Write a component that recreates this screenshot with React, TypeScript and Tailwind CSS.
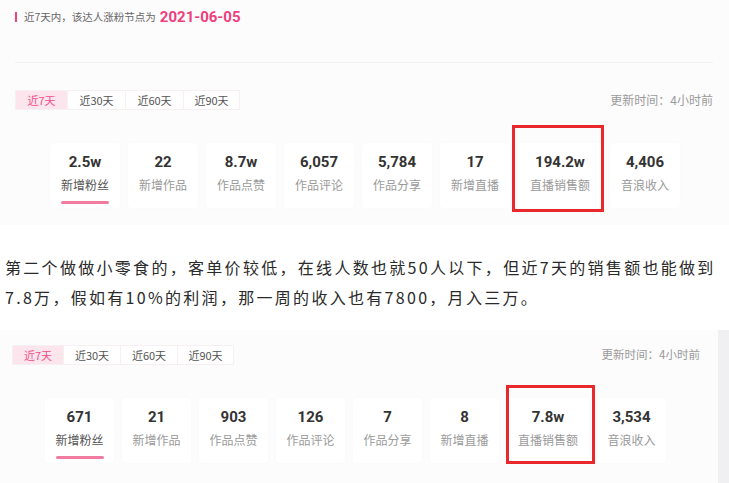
import React from 'react'

interface Stat {
  value: string
  label: string
  wide?: boolean
  boxed?: boolean
}

interface RowProps {
  stats: Stat[]
  cardW: string
  wideW: string
  boxClass: string
}

const tabs = ['近7天', '近30天', '近60天', '近90天']

const cjk = { fontFamily: '"Noto Sans CJK SC", "Noto Sans", sans-serif' }
const num = { fontFamily: 'Roboto, "Noto Sans CJK SC", sans-serif' }

function Tabs({ widths }: { widths: string[] }) {
  return (
    <div className="flex h-[20px] border border-[#f7f0f3] bg-white">
      {tabs.map((t, i) => (
        <div
          key={t}
          className={`${widths[i]} flex items-center justify-center text-[11px] ${
            i === 0 ? 'bg-[#fde5ee] text-[#ef5089]' : 'border-l border-[#f7f0f3] text-[#555]'
          }`}
        >
          {t}
        </div>
      ))}
    </div>
  )
}

function StatRow({ stats, cardW, wideW, boxClass }: RowProps) {
  return (
    <div className="flex gap-[8px]">
      {stats.map((s, i) => (
        <div
          key={s.label}
          className={`relative h-[65px] ${s.wide ? wideW : cardW} rounded bg-white shadow-[0_0_5px_rgba(0,0,0,0.015)] flex flex-col items-center`}
        >
          <div className="mt-[9px] h-[20px] leading-[20px] text-[15px] font-bold text-[#333]" style={num}>
            {s.value}
          </div>
          <div className={`mt-[5px] h-[16px] leading-[16px] text-[12px] ${i === 0 ? 'text-[#555]' : 'text-[#9a9a9a]'}`}>
            {s.label}
          </div>
          {i === 0 && <div className="mt-[8px] h-[3px] w-[48px] rounded-full bg-[#f27ba0]" />}
          {s.boxed && <div className={`absolute border-[3px] border-[#e8282b] ${boxClass}`} />}
        </div>
      ))}
    </div>
  )
}

const first: Stat[] = [
  { value: '2.5w', label: '新增粉丝' },
  { value: '22', label: '新增作品' },
  { value: '8.7w', label: '作品点赞' },
  { value: '6,057', label: '作品评论' },
  { value: '5,784', label: '作品分享' },
  { value: '17', label: '新增直播' },
  { value: '194.2w', label: '直播销售额', wide: true, boxed: true },
  { value: '4,406', label: '音浪收入' },
]

const second: Stat[] = [
  { value: '671', label: '新增粉丝' },
  { value: '21', label: '新增作品' },
  { value: '903', label: '作品点赞' },
  { value: '126', label: '作品评论' },
  { value: '7', label: '作品分享' },
  { value: '8', label: '新增直播' },
  { value: '7.8w', label: '直播销售额', wide: true, boxed: true },
  { value: '3,534', label: '音浪收入' },
]

export default function App() {
  return (
    <div className="w-[729px] h-[483px] overflow-hidden bg-white" style={cjk}>
      {/* first panel */}
      <section className="h-[225px] bg-[#fdfcfd] pl-[15px] pr-[16px] pt-[10px]">
        <div className="flex h-[14px] items-center">
          <div className="h-[10px] w-[2px] bg-[#f0407d]" />
          <span className="ml-[7px] text-[10.5px] text-[#666]">近7天内，该达人涨粉节点为</span>
          <span className="ml-[4px] text-[15px] font-bold text-[#ee3e7c]" style={num}>
            2021-06-05
          </span>
        </div>
        <div className="mt-[38px] h-px bg-[#f5f0f3]" />
        <div className="mt-[27px] flex items-center justify-between">
          <Tabs widths={['w-[51px]', 'w-[58px]', 'w-[58px]', 'w-[56px]']} />
          <span className="text-[12px] text-[#9a9a9a]">更新时间：4小时前</span>
        </div>
        <div className="mt-[33px] pl-[35px]">
          <StatRow
            stats={first}
            cardW="w-[70px]"
            wideW="w-[84px]"
            boxClass="-left-[6px] -right-[2px] -top-[18px] -bottom-[4px]"
          />
        </div>
      </section>

      {/* text */}
      <div className="h-[105px] pt-[27px] pl-[5px] whitespace-nowrap text-[16px] leading-[30px] tracking-[2.3px] text-[#2a2a2a]">
        第二个做做小零食的，客单价较低，在线人数也就50人以下，但近7天的销售额也能做到
        <br />
        7.8万，假如有10%的利润，那一周的收入也有7800，月入三万。
      </div>

      {/* second panel */}
      <section className="flex h-[153px]">
        <div className="flex-1 bg-[#fdfcfd] pl-[12px] pr-[18px] pt-[15px]">
          <div className="flex items-center justify-between">
            <Tabs widths={['w-[50px]', 'w-[57px]', 'w-[57px]', 'w-[56px]']} />
            <span className="text-[11.5px] text-[#9a9a9a]">更新时间：4小时前</span>
          </div>
          <div className="mt-[33px] pl-[33px]">
            <StatRow
              stats={second}
              cardW="w-[69px]"
              wideW="w-[82px]"
              boxClass="-left-[1px] -right-[6px] -top-[13px] -bottom-[1px]"
            />
          </div>
        </div>
        <div className="w-[11px] bg-[#f0f0f2]" />
      </section>
    </div>
  )
}
